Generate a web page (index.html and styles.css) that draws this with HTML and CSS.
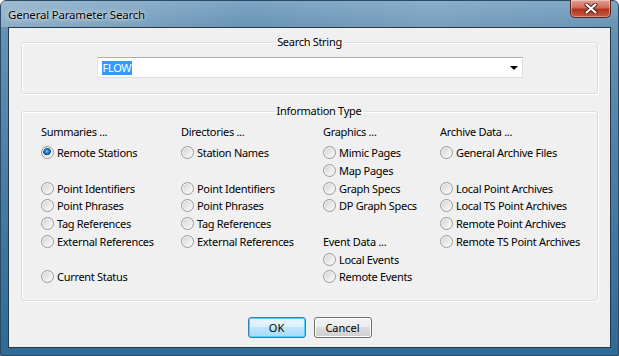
FILE: index.html
```html
<!DOCTYPE html>
<html lang="en">
<head>
  <meta charset="UTF-8">
  <title>General Parameter Search</title>
  <link rel="stylesheet" href="styles.css">
</head>
<body>
  <div class="window">
    <div class="titlebar">
      <span class="title">General Parameter Search</span>
      <button class="close">
        <svg width="14" height="11" viewBox="0 0 14 11">
          <path d="M2.5 1.5 L11.5 9.5 M11.5 1.5 L2.5 9.5" stroke="#4a1c18" stroke-width="4" stroke-linecap="round"/>
          <path d="M2.5 1.5 L11.5 9.5 M11.5 1.5 L2.5 9.5" stroke="#ffffff" stroke-width="2.2" stroke-linecap="round"/>
        </svg>
      </button>
    </div>

    <div class="client">
      <fieldset class="group search-group">
        <legend>Search String</legend>
        <div class="combo">
          <span class="combo-text"><span class="sel">FLOW</span></span>
          <span class="combo-arrow"></span>
        </div>
      </fieldset>

      <fieldset class="group info-group">
        <legend>Information Type</legend>
        <div class="columns">
          <div class="col">
            <div class="head">Summaries ...</div>
            <label class="radio checked"><span class="dot"></span>Remote Stations</label>
            <div></div>
            <label class="radio"><span class="dot"></span>Point Identifiers</label>
            <label class="radio"><span class="dot"></span>Point Phrases</label>
            <label class="radio"><span class="dot"></span>Tag References</label>
            <label class="radio"><span class="dot"></span>External References</label>
            <div></div>
            <label class="radio"><span class="dot"></span>Current Status</label>
          </div>
          <div class="col">
            <div class="head">Directories ...</div>
            <label class="radio"><span class="dot"></span>Station Names</label>
            <div></div>
            <label class="radio"><span class="dot"></span>Point Identifiers</label>
            <label class="radio"><span class="dot"></span>Point Phrases</label>
            <label class="radio"><span class="dot"></span>Tag References</label>
            <label class="radio"><span class="dot"></span>External References</label>
          </div>
          <div class="col">
            <div class="head">Graphics ...</div>
            <label class="radio"><span class="dot"></span>Mimic Pages</label>
            <label class="radio"><span class="dot"></span>Map Pages</label>
            <label class="radio"><span class="dot"></span>Graph Specs</label>
            <label class="radio"><span class="dot"></span>DP Graph Specs</label>
            <div></div>
            <div class="head">Event Data ...</div>
            <label class="radio"><span class="dot"></span>Local Events</label>
            <label class="radio"><span class="dot"></span>Remote Events</label>
          </div>
          <div class="col">
            <div class="head">Archive Data ...</div>
            <label class="radio"><span class="dot"></span>General Archive Files</label>
            <div></div>
            <label class="radio"><span class="dot"></span>Local Point Archives</label>
            <label class="radio"><span class="dot"></span>Local TS Point Archives</label>
            <label class="radio"><span class="dot"></span>Remote Point Archives</label>
            <label class="radio"><span class="dot"></span>Remote TS Point Archives</label>
          </div>
        </div>
      </fieldset>

      <div class="buttons">
        <button class="btn default">OK</button>
        <button class="btn">Cancel</button>
      </div>
    </div>
  </div>
</body>
</html>
```

FILE: styles.css
```css
html, body {
  margin: 0;
  background: #ffffff;
}

body {
  font-family: "Noto Sans", Arial, sans-serif;
  font-size: 11px;
  letter-spacing: -0.3px;
  color: #000;
}

.window {
  width: 619px;
  height: 356px;
  box-sizing: border-box;
  padding: 0 7px 7px 7px;
  display: flex;
  flex-direction: column;
  border: 1px solid #2a4b66;
  border-radius: 6px 6px 0 0;
  background: linear-gradient(to bottom, #7ea5c3 0, #6591b3 30px, #4d7fa6 160px, #2f6b94 100%);
}

.titlebar {
  height: 26px;
  display: flex;
  justify-content: space-between;
  align-items: flex-start;
  background: linear-gradient(100deg, rgba(255,255,255,0.25) 0, rgba(255,255,255,0) 40%, rgba(255,255,255,0.1) 70%, rgba(255,255,255,0) 100%);
  margin: 0 -7px;
  padding: 0 7px;
}

.title {
  font-size: 11.5px;
  letter-spacing: -0.2px;
  line-height: 28px;
  text-shadow: 0 0 6px rgba(255,255,255,0.9), 0 0 2px rgba(255,255,255,0.8);
}

.close {
  width: 41px;
  height: 18px;
  margin: -1px 0 0 0;
  padding: 0;
  border: 1px solid #5a2620;
  border-top: none;
  border-radius: 0 0 5px 5px;
  background: linear-gradient(to bottom, #e3a195 0, #cf6a58 45%, #b2321f 55%, #c95b3f 100%);
  box-shadow: inset 0 0 0 1px rgba(255,255,255,0.35);
  display: flex;
  align-items: center;
  justify-content: center;
}

.client {
  flex: 1;
  background: #f0f0f0;
  border: 1px solid #233a4e;
  display: flex;
  flex-direction: column;
  padding: 0 12px;
}

.group {
  margin: 0;
  padding: 0;
  min-width: 0;
  border: 1px solid #d5dfe5;
  border-radius: 3px;
  box-shadow: inset 1px 1px 0 #fff, 1px 1px 0 #fff;
}

.group legend {
  margin: 0 auto;
  padding: 0 3px;
  line-height: 14px;
}

.search-group {
  margin-top: 7px;
  padding: 8px 0 15px;
}

.combo {
  width: 426px;
  height: 21px;
  box-sizing: border-box;
  margin: 0 auto;
  background: #fff;
  border: 1px solid #dbdfe6;
  border-top-color: #abadb3;
  border-left-color: #e2e3ea;
  display: flex;
  align-items: center;
  justify-content: space-between;
  padding: 0 4px 0 4px;
}

.sel {
  background: #3399ff;
  color: #fff;
  padding: 0 1px;
  line-height: 14px;
  display: inline-block;
}

.combo-arrow {
  width: 0;
  height: 0;
  border-left: 4px solid transparent;
  border-right: 4px solid transparent;
  border-top: 4px solid #000;
}

.info-group {
  margin-top: 10px;
  padding: 0 0 14px 19px;
}

.columns {
  display: grid;
  grid-template-columns: 140px 142px 117px 1fr;
}

.col {
  display: grid;
  grid-template-rows: 26px repeat(8, 17.71px);
}

.head {
  display: flex;
  align-items: center;
}

.radio {
  display: flex;
  align-items: center;
  white-space: nowrap;
}

.dot {
  width: 13px;
  height: 13px;
  box-sizing: border-box;
  border-radius: 50%;
  border: 1px solid #9a9a9a;
  margin-right: 3px;
  background: linear-gradient(135deg, #cfcfcf 0, #e8e8e8 50%, #fdfdfd 100%);
  box-shadow: inset 0 0 0 1px #f4f4f4;
}

.checked .dot {
  background:
    radial-gradient(circle at 45% 40%, #8fd3ff 0, #2d8bd6 1.5px, #0f4f8a 3.5px, #0f4f8a 3.6px, rgba(15,79,138,0) 4.2px),
    linear-gradient(135deg, #cfcfcf 0, #e8e8e8 50%, #fdfdfd 100%);
}

.buttons {
  display: flex;
  justify-content: center;
  gap: 8px;
  margin-top: 16px;
}

.btn {
  width: 58px;
  height: 21px;
  padding: 0;
  font: inherit;
  color: #000;
  border: 1px solid #707070;
  border-radius: 3px;
  background: linear-gradient(to bottom, #f2f2f2 0, #ebebeb 50%, #dddddd 50%, #cfcfcf 100%);
  box-shadow: inset 0 0 0 1px #fcfcfc;
}

.btn.default {
  border-color: #3c7fb1;
  background: linear-gradient(to bottom, #eaf6fd 0, #d9f0fc 50%, #bee6fd 50%, #a7d9f5 100%);
  box-shadow: inset 0 0 0 1px #48d1ff;
}
```
